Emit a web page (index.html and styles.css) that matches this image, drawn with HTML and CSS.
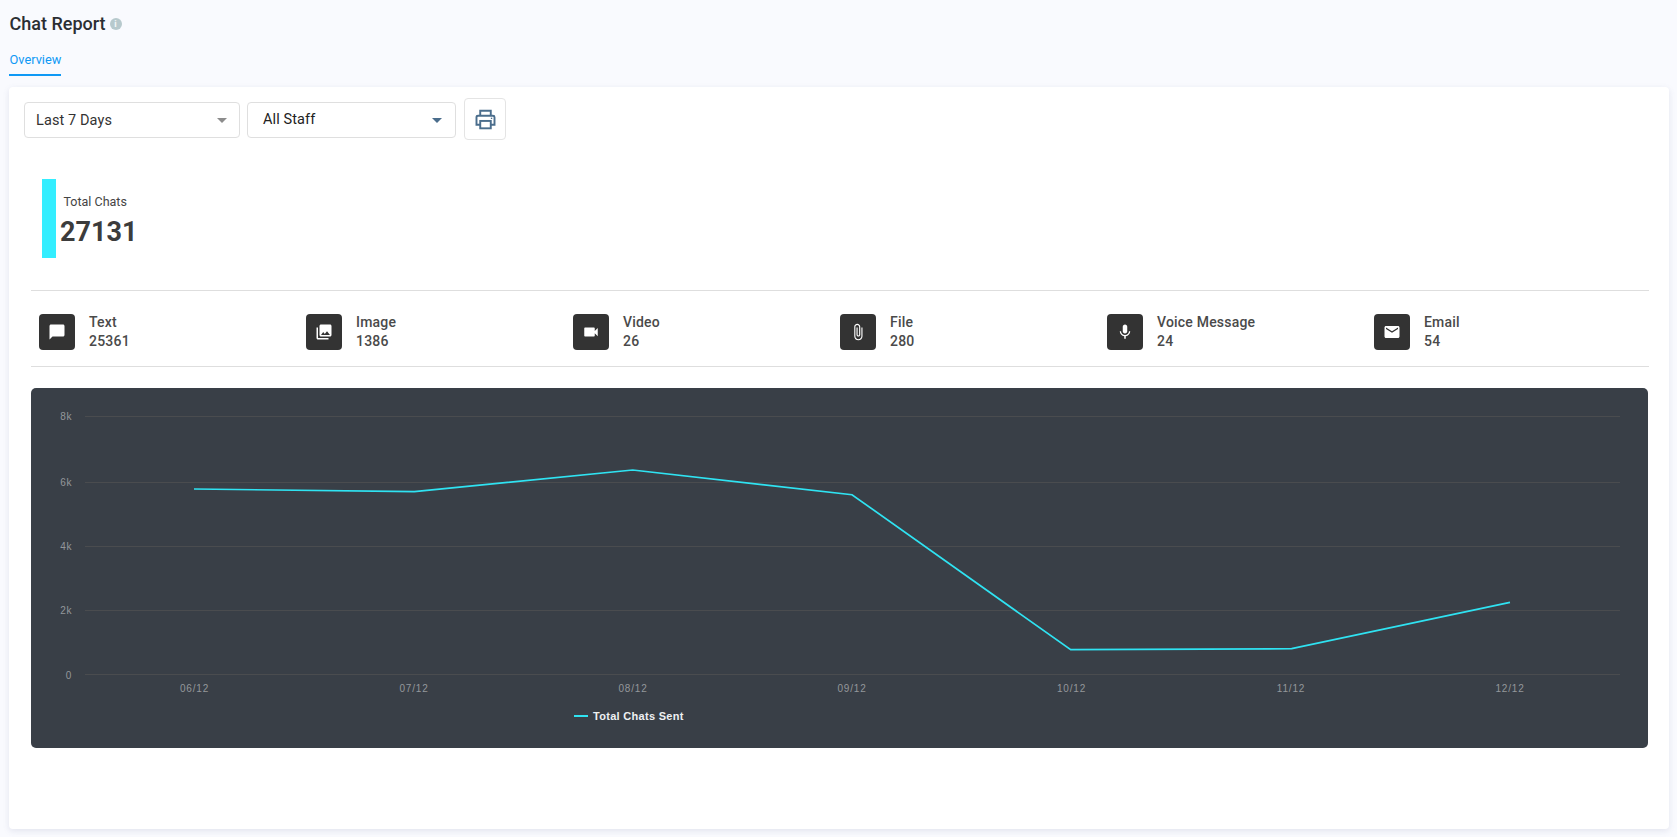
FILE: index.html
```html
<!DOCTYPE html>
<html lang="en">
<head>
<meta charset="utf-8">
<title>Chat Report</title>
<link rel="stylesheet" href="styles.css">
</head>
<body>
<header class="page-header">
  <div class="title-row">
    <h1 class="title">Chat Report</h1>
    <span class="info-badge">i</span>
  </div>
  <nav class="tabs"><a class="tab">Overview</a></nav>
</header>
<main class="card">
  <div class="filters">
    <div class="select select-period"><span>Last 7 Days</span><i class="caret caret-grey"></i></div>
    <div class="select select-staff"><span>All Staff</span><i class="caret caret-blue"></i></div>
    <button class="print-btn" type="button" aria-label="Print">
      <svg width="23" height="23" viewBox="0 0 24 24" fill="none" stroke="#4a6d8c" stroke-width="2">
        <path d="M6.5 8V2.8h11V8"/>
        <path d="M6.5 17.5H2.6V9.6c0-.9.7-1.6 1.6-1.6h15.6c.9 0 1.6.7 1.6 1.6v7.9h-3.9"/>
        <rect x="6.5" y="13.5" width="11" height="7.7"/>
        <path d="M17.6 10.8h1.4" stroke-width="1.4"/>
      </svg>
    </button>
  </div>
  <section class="total">
    <div class="total-bar"></div>
    <div class="total-text">
      <div class="total-label">Total Chats</div>
      <div class="total-value">27131</div>
    </div>
  </section>
  <section class="stats">
    <div class="stat">
      <div class="stat-icon"><svg viewBox="0 0 24 24"><path d="M20 2H4c-1.1 0-2 .9-2 2v18l4-4h14c1.1 0 2-.9 2-2V4c0-1.1-.9-2-2-2z"/></svg></div>
      <div class="stat-text"><div>Text</div><div>25361</div></div>
    </div>
    <div class="stat">
      <div class="stat-icon"><svg viewBox="0 0 24 24"><path d="M22 16V4c0-1.1-.9-2-2-2H8c-1.1 0-2 .9-2 2v12c0 1.1.9 2 2 2h12c1.1 0 2-.9 2-2zm-11-4l2.03 2.71L16 11l4 5H8l3-4zM2 6v14c0 1.1.9 2 2 2h14v-2H4V6H2z"/></svg></div>
      <div class="stat-text"><div>Image</div><div>1386</div></div>
    </div>
    <div class="stat">
      <div class="stat-icon"><svg viewBox="0 0 24 24"><path d="M17 10.5V7c0-.55-.45-1-1-1H4c-.55 0-1 .45-1 1v10c0 .55.45 1 1 1h12c.55 0 1-.45 1-1v-3.5l4 4v-11l-4 4z"/></svg></div>
      <div class="stat-text"><div>Video</div><div>26</div></div>
    </div>
    <div class="stat">
      <div class="stat-icon"><svg viewBox="0 0 24 24"><path d="M16.5 6v11.5c0 2.21-1.79 4-4 4s-4-1.79-4-4V5c0-1.38 1.12-2.5 2.5-2.5s2.5 1.12 2.5 2.5v10.5c0 .55-.45 1-1 1s-1-.45-1-1V6H10v9.5c0 1.38 1.12 2.5 2.5 2.5s2.5-1.12 2.5-2.5V5c0-2.21-1.79-4-4-4S7 2.79 7 5v12.5c0 3.04 2.46 5.5 5.5 5.5s5.5-2.46 5.5-5.5V6h-1.5z"/></svg></div>
      <div class="stat-text"><div>File</div><div>280</div></div>
    </div>
    <div class="stat">
      <div class="stat-icon"><svg viewBox="0 0 24 24"><path d="M12 14c1.66 0 2.99-1.34 2.99-3L15 5c0-1.66-1.34-3-3-3S9 3.34 9 5v6c0 1.66 1.34 3 3 3zm5.3-3c0 3-2.54 5.1-5.3 5.1S6.7 14 6.7 11H5c0 3.41 2.72 6.23 6 6.72V21h2v-3.28c3.28-.48 6-3.3 6-6.72h-1.7z"/></svg></div>
      <div class="stat-text"><div>Voice Message</div><div>24</div></div>
    </div>
    <div class="stat">
      <div class="stat-icon"><svg viewBox="0 0 24 24"><path d="M20 4H4c-1.1 0-1.99.9-1.99 2L2 18c0 1.1.9 2 2 2h16c1.1 0 2-.9 2-2V6c0-1.1-.9-2-2-2zm0 4l-8 5-8-5V6l8 5 8-5v2z"/></svg></div>
      <div class="stat-text"><div>Email</div><div>54</div></div>
    </div>
  </section>
  <section class="chart">
    <svg class="chart-svg" width="1617" height="360" viewBox="0 0 1617 360">
      <g class="grid">
        <line x1="54" x2="1589" y1="28.5" y2="28.5"/>
        <line x1="54" x2="1589" y1="94.5" y2="94.5"/>
        <line x1="54" x2="1589" y1="158.5" y2="158.5"/>
        <line x1="54" x2="1589" y1="222.5" y2="222.5"/>
        <line x1="54" x2="1589" y1="286.5" y2="286.5"/>
      </g>
      <g class="y-labels">
        <text x="41" y="32">8k</text>
        <text x="41" y="98">6k</text>
        <text x="41" y="162">4k</text>
        <text x="41" y="226">2k</text>
        <text x="41" y="291">0</text>
      </g>
      <polyline class="series" points="163,101 383.3,103.7 601.7,82 821,106.7 1039.7,261.7 1260.7,260.7 1479,214.3"/>
      <g class="x-labels">
        <text x="163.5" y="304">06/12</text>
        <text x="383" y="304">07/12</text>
        <text x="602" y="304">08/12</text>
        <text x="821" y="304">09/12</text>
        <text x="1040.5" y="304">10/12</text>
        <text x="1260" y="304">11/12</text>
        <text x="1479" y="304">12/12</text>
      </g>
      <line class="legend-key" x1="543" x2="557" y1="328" y2="328"/>
      <text class="legend-text" x="562" y="332">Total Chats Sent</text>
    </svg>
  </section>
</main>
</body>
</html>
```
FILE: styles.css
```css
* { box-sizing: border-box; }
html, body { margin: 0; height: 837px; overflow: hidden; }
body {
  background: #f9fafe;
  font-family: Roboto, "Liberation Sans", sans-serif;
  color: #333;
}
.page-header { height: 87px; padding: 13px 0 0 9.5px; }
.title-row { display: flex; align-items: center; height: 22px; gap: 4px; }
.title { margin: 0; font-size: 18px; font-weight: 500; line-height: 22px; color: #2b2e33; }
.info-badge {
  width: 12px; height: 12px; border-radius: 50%;
  background: #b7c9cd; color: #f4f7f8;
  font-size: 9px; font-weight: 700; line-height: 12px; text-align: center;
}
.tabs { display: flex; margin-top: 17px; }
.tab {
  display: block; height: 24px; padding: 0 0 0 0.5px;
  margin-left: -0.5px;
  font-size: 12.8px; font-weight: 400; line-height: 16px; color: #0f99f5;
  border-bottom: 2px solid #0f99f5;
}
.card {
  width: 1660px; height: 742px; margin-left: 9px;
  background: #fff; border-radius: 4px;
  box-shadow: 0 2px 6px rgba(90, 100, 140, .14);
  padding: 11px 21px 0 22px;
}
.filters { display: flex; align-items: flex-start; height: 41px; margin-left: -7px; }
.select {
  display: flex; align-items: center; justify-content: space-between;
  height: 36px; margin-top: 4px;
  border: 1px solid #dfdfdf; border-radius: 4px;
  font-size: 14.5px; letter-spacing: .1px; color: #333;
}
.select-period { width: 216px; padding: 0 12px 0 11px; }
.select-staff { width: 209px; margin-left: 7px; padding: 0 13px 1px 15px; color: #222; }
.caret {
  display: block; width: 0; height: 0;
  border-left: 5px solid transparent; border-right: 5px solid transparent;
  border-top: 5px solid #8c8c8c;
}
.caret-blue { border-top-color: #4a6d8c; margin-top: 1px; }
.print-btn {
  display: flex; align-items: center; justify-content: center;
  width: 42px; height: 42px; margin-left: 8px; padding: 0;
  background: #fff; border: 1px solid #e4e4e4; border-radius: 4px;
}
.total { display: flex; height: 79px; margin: 40px 0 0 11px; }
.total-bar { width: 14px; background: #33eeff; }
.total-text { margin-left: 4px; }
.total-label { margin: 16px 0 0 3.5px; font-size: 12.5px; line-height: 14px; color: #444; }
.total-value { margin-top: 6px; font-size: 27px; font-weight: 700; line-height: 34px; color: #3c3c3c; }
.stats {
  display: grid; grid-template-columns: repeat(6, 267px);
  width: 1618px; height: 77px; margin-top: 32px;
  padding: 23px 0 0 7.5px;
  border-top: 1px solid #dedede; border-bottom: 1px solid #dedede;
}
.stat { display: flex; align-items: flex-start; gap: 14.5px; }
.stat-icon {
  display: flex; align-items: center; justify-content: center;
  width: 36px; height: 36px; border-radius: 4px; background: #333;
}
.stat-icon svg { width: 18px; height: 18px; fill: #fff; }
.stat-text { margin-top: -1px; font-size: 14px; font-weight: 500; line-height: 19px; letter-spacing: .2px; color: #4a4a4a; }
.chart {
  width: 1617px; height: 360px; margin-top: 21px;
  background: #393f47; border-radius: 5px; overflow: hidden;
}
.chart-svg { display: block; }
.grid line { stroke: #4a4c4f; stroke-width: 1; }
.y-labels text {
  font-family: "Liberation Sans", sans-serif;
  font-size: 10px; letter-spacing: .6px; fill: #94979b; text-anchor: end;
}
.x-labels text {
  font-family: "Liberation Sans", sans-serif;
  font-size: 10px; letter-spacing: .8px; fill: #94979b; text-anchor: middle;
}
.series { fill: none; stroke: #2fe3f2; stroke-width: 1.7; }
.legend-key { stroke: #2fe3f2; stroke-width: 2; }
.legend-text {
  font-family: "Liberation Sans", sans-serif;
  font-size: 11px; font-weight: 700; letter-spacing: .3px; fill: #eef0f2;
}
```
